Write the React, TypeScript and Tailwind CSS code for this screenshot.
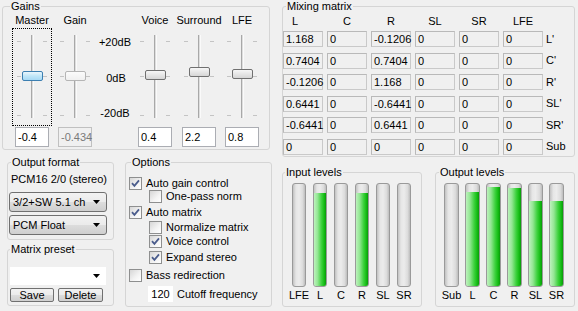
import React from "react";

const FONT = "font-['Liberation_Sans',Arial,sans-serif]";

function Group({
  title,
  legendCls,
  className,
  children,
}: {
  title: string;
  legendCls: string;
  className: string;
  children: React.ReactNode;
}) {
  return (
    <fieldset className={`min-w-0 border border-[#d5d5d5] rounded-[3px] ${className}`}>
      <legend className={`px-[1px] leading-[13px] ${legendCls}`}>{title}</legend>
      {children}
    </fieldset>
  );
}

const TICKS = ["top-[14px]", "top-[49px]", "top-[88px]"];

function Slider({ thumbTop, hot, disabled, focus }: { thumbTop: string; hot?: boolean; disabled?: boolean; focus?: boolean }) {
  const thumb = hot
    ? "border-[#3c7fb1] bg-[linear-gradient(#eaf6fd,#bfe6f8_50%,#a7d9f5)]"
    : disabled
    ? "border-[#b5b5b5] bg-[linear-gradient(#fbfbfb,#f0f0f0)]"
    : "border-[#707070] bg-[linear-gradient(#f6f6f6,#e6e6e6_50%,#d6d6d6)]";
  return (
    <div className="relative h-[100px] w-[40px]">
      {focus && <div className="absolute inset-x-0 inset-y-[1px] border border-dotted border-black" />}
      {TICKS.map((t) => (
        <React.Fragment key={t}>
          <div className={`absolute left-[5px] h-px w-[4px] bg-[#c4c4c4] ${t}`} />
          <div className={`absolute left-[31px] h-px w-[4px] bg-[#c4c4c4] ${t}`} />
        </React.Fragment>
      ))}
      <div className="absolute left-[19px] top-[8px] h-[83px] w-[3px] border-l border-l-[#a8a8a8] border-r border-r-[#fafafa] bg-[#dedede]" />
      <div className={`absolute left-[10px] h-[10px] w-[21px] rounded-[2px] border ${thumb} ${thumbTop}`} />
    </div>
  );
}

function SliderCol({
  label,
  value,
  thumbTop,
  hot,
  disabled,
  focus,
  className = "",
}: {
  label: string;
  value: string;
  thumbTop: string;
  hot?: boolean;
  disabled?: boolean;
  focus?: boolean;
  className?: string;
}) {
  return (
    <div className={`flex w-[40px] flex-col items-center ${className}`}>
      <div className="h-[13px] whitespace-nowrap">{label}</div>
      <Slider thumbTop={thumbTop} hot={hot} disabled={disabled} focus={focus} />
      <div
        className={`h-[20px] w-[34px] border pl-[2px] leading-[18px] ${
          disabled ? "border-[#c0c0c0] bg-[#f0f0f0] text-[#7a7a7a]" : "border-[#abadb3] bg-white"
        }`}
      >
        {value}
      </div>
    </div>
  );
}

function Gains() {
  return (
    <Group title="Gains" legendCls="ml-[7px]" className="h-[150px] w-[268px]">
      <div className="flex pl-[9px] pt-[1px]">
        <SliderCol label="Master" value="-0.4" thumbTop="top-[44px]" hot focus />
        <SliderCol label="Gain" value="-0.434" thumbTop="top-[44px]" disabled className="ml-[3px]" />
        <div className="flex w-[40px] flex-col">
          <div className="h-[13px]" />
          <div className="flex h-[84px] flex-col items-center justify-between pt-[0px] mt-[9px]">
            <div>+20dB</div>
            <div className="pl-[2px]">0dB</div>
            <div>-20dB</div>
          </div>
        </div>
        <SliderCol label="Voice" value="0.4" thumbTop="top-[43px]" />
        <SliderCol label="Surround" value="2.2" thumbTop="top-[40px]" className="ml-[4px]" />
        <SliderCol label="LFE" value="0.8" thumbTop="top-[42px]" className="ml-[3px]" />
      </div>
    </Group>
  );
}

function Arrow() {
  return (
    <svg width="7" height="4" viewBox="0 0 7 4" className="shrink-0">
      <polygon points="0,0 7,0 3.5,4" fill="#000" />
    </svg>
  );
}

function Combo({ text, className = "" }: { text: string; className?: string }) {
  return (
    <div
      className={`flex h-[20px] items-center rounded-[3px] border border-[#707070] bg-[linear-gradient(#f2f2f2,#ebebeb_50%,#dddddd_50%,#cfcfcf)] pl-[3px] pr-[6px] ${className}`}
    >
      <span className="flex-1 whitespace-nowrap">{text}</span>
      <Arrow />
    </div>
  );
}

function OutputFormat() {
  return (
    <Group title="Output format" legendCls="ml-[3px]" className="h-[84px] w-[107px]">
      <div className="flex flex-col pl-[1px] pt-[4px]">
        <div className="ml-[2px] whitespace-nowrap">PCM16 2/0 (stereo)</div>
        <Combo text="3/2+SW 5.1 ch" className="mt-[6px] w-[98px]" />
        <Combo text="PCM Float" className="mt-[3px] w-[98px]" />
      </div>
    </Group>
  );
}

function Btn({ text, className = "" }: { text: string; className?: string }) {
  return (
    <div
      className={`flex h-[14px] items-center justify-center rounded-[2px] border border-[#707070] bg-[linear-gradient(#f2f2f2,#ebebeb_50%,#dddddd_50%,#cfcfcf)] leading-[12px] ${className}`}
    >
      {text}
    </div>
  );
}

function MatrixPreset() {
  return (
    <Group title="Matrix preset" legendCls="ml-[2px]" className="mt-[3px] h-[63px] w-[107px]">
      <div className="flex flex-col pl-[2px] pt-[11px]">
        <div className="flex h-[18px] w-[96px] items-center justify-end bg-white pr-[6px]">
          <Arrow />
        </div>
        <div className="mt-[3px] flex gap-[4px]">
          <Btn text="Save" className="w-[44px]" />
          <Btn text="Delete" className="w-[45px]" />
        </div>
      </div>
    </Group>
  );
}

function Check({ checked }: { checked?: boolean }) {
  return (
    <span className="relative block h-[13px] w-[13px] shrink-0 border border-[#8e8f8f] bg-[linear-gradient(135deg,#d6d6d6,#f4f4f4_60%,#ffffff)]">
      {checked && (
        <svg className="absolute left-0 top-0" width="11" height="11" viewBox="0 0 11 11">
          <path d="M2 5.2 L4.4 7.8 L9 2.4" fill="none" stroke="#4a5c8c" strokeWidth="1.8" />
        </svg>
      )}
    </span>
  );
}

function CheckRow({ label, checked, className = "" }: { label: string; checked?: boolean; className?: string }) {
  return (
    <div className={`flex h-[13px] items-center ${className}`}>
      <Check checked={checked} />
      <span className="ml-[4px] whitespace-nowrap">{label}</span>
    </div>
  );
}

function Options() {
  return (
    <Group title="Options" legendCls="ml-[5px]" className="ml-[11px] h-[151px] w-[147px]">
      <div className="flex flex-col pl-[3px]">
        <CheckRow label="Auto gain control" checked className="mt-[8px]" />
        <CheckRow label="One-pass norm" className="pl-[20px]" />
        <CheckRow label="Auto matrix" checked className="mt-[3px]" />
        <CheckRow label="Normalize matrix" className="mt-[2px] pl-[20px]" />
        <CheckRow label="Voice control" checked className="mt-[1px] pl-[20px]" />
        <CheckRow label="Expand stereo" checked className="mt-[3px] pl-[20px]" />
        <CheckRow label="Bass redirection" className="mt-[5px]" />
        <div className="mt-[4px] flex items-center pl-[19px]">
          <div className="h-[16px] w-[25px] bg-white text-center leading-[16px]">120</div>
          <span className="ml-[4px] whitespace-nowrap">Cutoff frequency</span>
        </div>
      </div>
    </Group>
  );
}

const MATRIX: string[][] = [
  ["1.168", "0", "-0.1206", "0", "0", "0", "L'"],
  ["0.7404", "0", "0.7404", "0", "0", "0", "C'"],
  ["-0.1206", "0", "1.168", "0", "0", "0", "R'"],
  ["0.6441", "0", "-0.6441", "0", "0", "0", "SL'"],
  ["-0.6441", "0", "0.6441", "0", "0", "0", "SR'"],
  ["0", "0", "0", "0", "0", "0", "Sub"],
];

function Matrix() {
  return (
    <Group title="Mixing matrix" legendCls="ml-[3px]" className="h-[157px] w-[293px]">
      <div className="pt-[2px]">
        <div className="grid grid-cols-[40px_40px_40px_40px_40px_40px_auto] gap-x-[4px]">
          <div className="pl-[9px]">L</div>
          <div className="text-center">C</div>
          <div className="text-center">R</div>
          <div className="text-center">SL</div>
          <div className="text-center">SR</div>
          <div className="text-center">LFE</div>
          <div />
        </div>
        <div className="mt-[3px] grid grid-cols-[40px_40px_40px_40px_40px_40px_auto] items-center gap-x-[4px] gap-y-[5.6px]">
          {MATRIX.map((row, r) =>
            row.map((v, c) =>
              c < 6 ? (
                <div
                  key={`${r}-${c}`}
                  className="h-[16px] border border-[#c9c9c9] border-t-[#b9b9b9] border-l-[#b9b9b9] pl-[2px] leading-[14px]"
                >
                  {v}
                </div>
              ) : (
                <div key={`${r}-${c}`} className="-ml-[1px] whitespace-nowrap">
                  {v}
                </div>
              )
            )
          )}
        </div>
      </div>
    </Group>
  );
}

function Bar({ fill, w }: { fill: number; w: string }) {
  return (
    <div
      className={`flex h-[104px] ${w} flex-col justify-end overflow-hidden rounded-[3px] border border-[#9a9a9a] bg-[linear-gradient(to_right,#c2c2c2,#e6e6e6_25%,#ececec_50%,#dcdcdc_80%,#bdbdbd)]`}
    >
      {fill > 0 && (
        <div
          className="w-full bg-[linear-gradient(to_right,#bdf2bd,#93e693_30%,#3fd23f_62%,#14bd14_85%,#0a990a)]"
          style={{ height: `${fill}px` }}
        />
      )}
    </div>
  );
}

function Levels({
  title,
  legendCls,
  className,
  data,
  pad,
  gap,
  w,
}: {
  title: string;
  legendCls: string;
  className: string;
  data: [string, number][];
  pad: string;
  gap: string;
  w: string;
}) {
  return (
    <Group title={title} legendCls={legendCls} className={className}>
      <div className={`flex pt-[4px] ${pad} ${gap}`}>
        {data.map(([label, fill]) => (
          <div key={label} className={`flex ${w} flex-col items-center`}>
            <Bar fill={fill} w={w} />
            <div className="mt-[2px] whitespace-nowrap">{label}</div>
          </div>
        ))}
      </div>
    </Group>
  );
}

export default function App() {
  return (
    <div className={`flex h-[311px] w-[578px] overflow-hidden bg-[#f0f0f0] text-[11px] leading-[13px] text-black ${FONT}`}>
      <div className="flex w-[272px] flex-col pl-[2px]">
        <Gains />
        <div className="mt-[6px] flex pl-[5px]">
          <div className="flex w-[107px] flex-col">
            <OutputFormat />
            <MatrixPreset />
          </div>
          <Options />
        </div>
      </div>
      <div className="ml-[10px] flex w-[293px] flex-col">
        <Matrix />
        <div className="mt-[9px] flex">
          <Levels
            title="Input levels"
            legendCls="ml-[2px]"
            className="h-[141px] w-[140px]"
            pad="pl-[9px]"
            gap="gap-[7px]"
            w="w-[14px]"
            data={[
              ["LFE", 0],
              ["L", 93],
              ["C", 0],
              ["R", 93],
              ["SL", 0],
              ["SR", 0],
            ]}
          />
          <Levels
            title="Output levels"
            legendCls="ml-[3px]"
            className="ml-[13px] h-[141px] w-[140px]"
            pad="pl-[8px]"
            gap="gap-[6px]"
            w="w-[15px]"
            data={[
              ["Sub", 0],
              ["L", 94],
              ["C", 99],
              ["R", 98],
              ["SL", 85],
              ["SR", 85],
            ]}
          />
        </div>
      </div>
    </div>
  );
}
